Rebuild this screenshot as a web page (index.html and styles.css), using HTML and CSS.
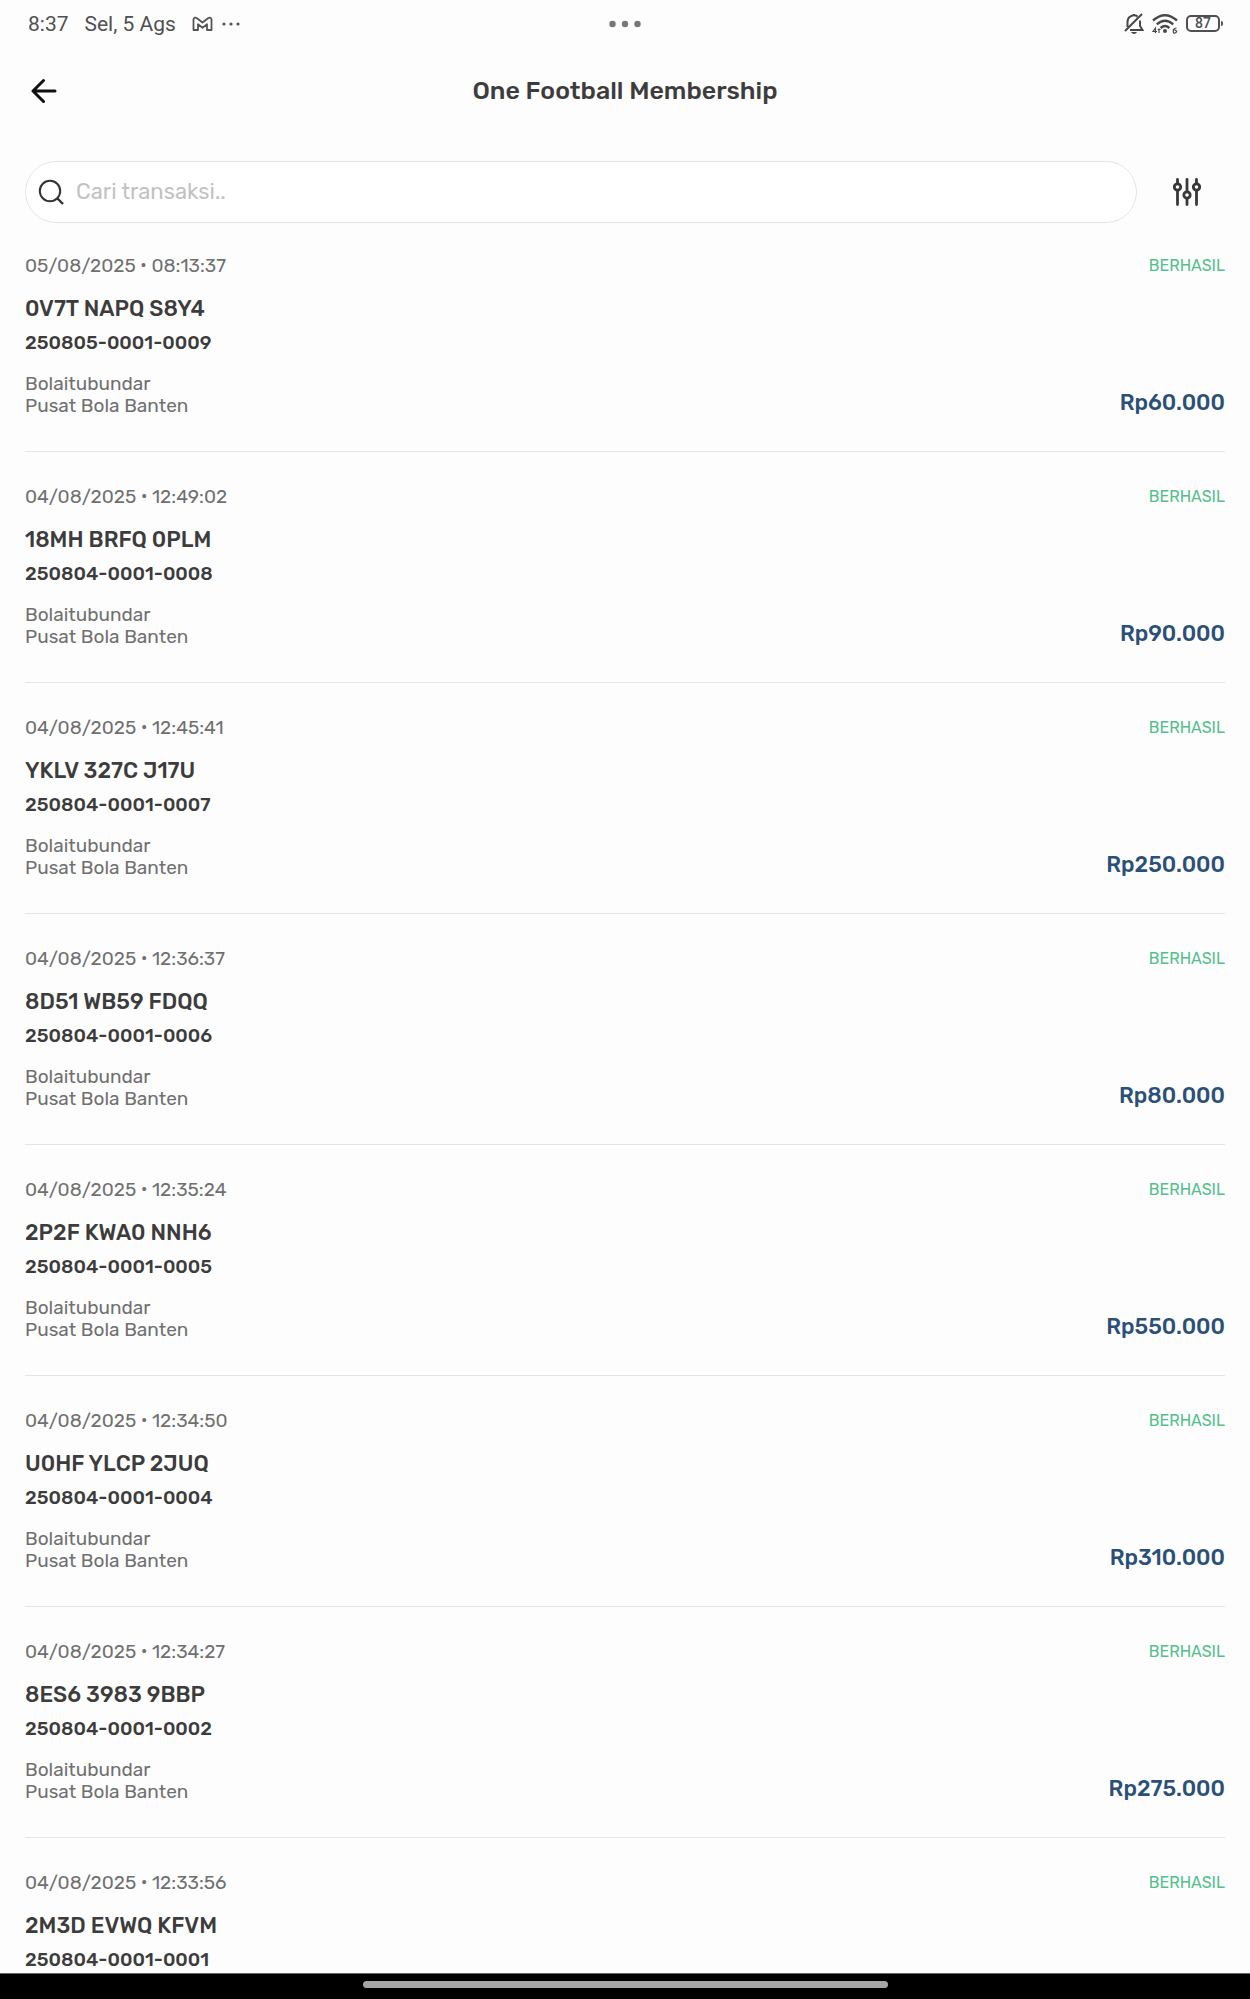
FILE: index.html
```html
<!DOCTYPE html>
<html lang="id">
<head>
<meta charset="utf-8">
<meta name="viewport" content="width=device-width, initial-scale=1">
<title>One Football Membership</title>
<link rel="stylesheet" href="styles.css">
</head>
<body>
<div class="screen">
  <div class="status-bar">
    <div class="status-left">
      <span>8:37</span>
      <span>Sel, 5 Ags</span>
      <svg class="status-mail" width="48" height="16" viewBox="0 0 48 16" aria-hidden="true">
        <path d="M1.500 14V3.200Q2.500.6 5 2.200L10.500 6.500 16 2.200Q18.500.6 19.500 3.200V14H15V8.200L10.500 11.700 6 8.200V14Z" fill="none" stroke="#555" stroke-width="1.800" stroke-linejoin="round"/>
        <g fill="#555"><circle cx="32" cy="8" r="1.600"/><circle cx="39" cy="8" r="1.600"/><circle cx="46" cy="8" r="1.600"/></g>
      </svg>
    </div>
    <svg width="32" height="8" viewBox="0 0 32 8" fill="#777" aria-hidden="true"><circle cx="3.500" cy="4" r="3.200"/><circle cx="16" cy="4" r="3.200"/><circle cx="28.500" cy="4" r="3.200"/></svg>
    <div class="status-right">
      <svg width="20" height="22" viewBox="0 0 20 22" fill="none" stroke="#484848" stroke-width="2" aria-hidden="true">
        <path d="M3.500 14V8.500A6.300 6.300 0 0 1 13.500 3.600M16 7.500V13L18.500 17H6M1 18 18 1M10 1V3"/>
        <path d="M7 19H13Q12 21 10 21T7 19Z" fill="#484848" stroke="none"/>
      </svg>
      <svg width="26" height="22" viewBox="0 0 26 22" aria-hidden="true">
        <g fill="none" stroke="#484848" stroke-width="2.400"><path d="M1 7.500Q13-3 25 7.500M4.800 11.300Q13 4 21.200 11.300M8.600 15Q13 11 17.400 15"/></g>
        <circle cx="13" cy="18" r="2" fill="#484848"/>
        <path d="M3.500 20V15L1 18.500H5M7 20V15.500M5.800 16.500H8.500M24.500 15Q21.300 15 21.300 18T23 20 24.700 18.500 23 17 21.300 18.300" fill="none" stroke="#484848" stroke-width="1.200"/>
      </svg>
      <span class="battery">87</span>
    </div>
  </div>

  <header class="app-bar">
    <button class="icon-button" type="button" aria-label="Kembali">
      <svg width="26" height="26" viewBox="0 0 26 26" fill="none" stroke="#111" stroke-width="3" stroke-linecap="round" stroke-linejoin="round" aria-hidden="true"><path d="M24 13H2M12.500 2.500 2 13 12.500 23.500"/></svg>
    </button>
    <h1 class="app-title">One Football Membership</h1>
  </header>

  <form class="search-row" role="search">
    <label class="search-box">
      <svg width="26" height="26" viewBox="0 0 26 26" fill="none" stroke="#333" stroke-width="2" aria-hidden="true"><circle cx="12" cy="12" r="10.200"/><path d="M19.500 19.500 25 25" stroke-width="2.400"/></svg>
      <input class="search-input" type="search" placeholder="Cari transaksi.." aria-label="Cari transaksi">
    </label>
    <button class="filter-button" type="button" aria-label="Filter">
      <svg width="28" height="28" viewBox="0 0 28 28" fill="none" stroke="#383838" stroke-width="2.800" stroke-linecap="round" aria-hidden="true"><path d="M4.500 1.500V5M4.500 13V26.500M14 1.500V13M14 21V26.500M23.500 1.500V5M23.500 13V26.500"/><circle cx="4.500" cy="9" r="3.200"/><circle cx="14" cy="17" r="3.200"/><circle cx="23.500" cy="9" r="3.200"/></svg>
    </button>
  </form>

  <ul class="transactions">
    <li class="transaction">
      <div class="details"><time class="date">05/08/2025 <span class="dot">•</span> 08:13:37</time><strong class="code">0V7T NAPQ S8Y4</strong><span class="number">250805-0001-0009</span><span class="place">Bolaitubundar<br>Pusat Bola Banten</span></div>
      <div class="result"><span class="state">BERHASIL</span><span class="amount">Rp60.000</span></div>
    </li>
    <li class="transaction">
      <div class="details"><time class="date">04/08/2025 <span class="dot">•</span> 12:49:02</time><strong class="code">18MH BRFQ 0PLM</strong><span class="number">250804-0001-0008</span><span class="place">Bolaitubundar<br>Pusat Bola Banten</span></div>
      <div class="result"><span class="state">BERHASIL</span><span class="amount">Rp90.000</span></div>
    </li>
    <li class="transaction">
      <div class="details"><time class="date">04/08/2025 <span class="dot">•</span> 12:45:41</time><strong class="code">YKLV 327C J17U</strong><span class="number">250804-0001-0007</span><span class="place">Bolaitubundar<br>Pusat Bola Banten</span></div>
      <div class="result"><span class="state">BERHASIL</span><span class="amount">Rp250.000</span></div>
    </li>
    <li class="transaction">
      <div class="details"><time class="date">04/08/2025 <span class="dot">•</span> 12:36:37</time><strong class="code">8D51 WB59 FDQQ</strong><span class="number">250804-0001-0006</span><span class="place">Bolaitubundar<br>Pusat Bola Banten</span></div>
      <div class="result"><span class="state">BERHASIL</span><span class="amount">Rp80.000</span></div>
    </li>
    <li class="transaction">
      <div class="details"><time class="date">04/08/2025 <span class="dot">•</span> 12:35:24</time><strong class="code">2P2F KWA0 NNH6</strong><span class="number">250804-0001-0005</span><span class="place">Bolaitubundar<br>Pusat Bola Banten</span></div>
      <div class="result"><span class="state">BERHASIL</span><span class="amount">Rp550.000</span></div>
    </li>
    <li class="transaction">
      <div class="details"><time class="date">04/08/2025 <span class="dot">•</span> 12:34:50</time><strong class="code">U0HF YLCP 2JUQ</strong><span class="number">250804-0001-0004</span><span class="place">Bolaitubundar<br>Pusat Bola Banten</span></div>
      <div class="result"><span class="state">BERHASIL</span><span class="amount">Rp310.000</span></div>
    </li>
    <li class="transaction">
      <div class="details"><time class="date">04/08/2025 <span class="dot">•</span> 12:34:27</time><strong class="code">8ES6 3983 9BBP</strong><span class="number">250804-0001-0002</span><span class="place">Bolaitubundar<br>Pusat Bola Banten</span></div>
      <div class="result"><span class="state">BERHASIL</span><span class="amount">Rp275.000</span></div>
    </li>
    <li class="transaction">
      <div class="details"><time class="date">04/08/2025 <span class="dot">•</span> 12:33:56</time><strong class="code">2M3D EVWQ KFVM</strong><span class="number">250804-0001-0001</span></div>
      <div class="result"><span class="state">BERHASIL</span></div>
    </li>
  </ul>

  <div class="nav-bar"><span class="nav-handle"></span></div>
</div>
</body>
</html>
```
FILE: styles.css
```css
* {
  box-sizing: border-box;
}

body {
  margin: 0;
  background: #fdfdfd;
  color: #3c3c3c;
  font-family: Rubik, Inter, sans-serif;
}

button {
  padding: 0;
  border: 0;
  background: none;
  cursor: pointer;
}

svg {
  display: block;
  flex: none;
}

.screen {
  display: flex;
  flex-direction: column;
  height: 100vh;
}

/* System status bar */
.status-bar {
  display: grid;
  grid-template-columns: 1fr auto 1fr;
  align-items: center;
  flex: none;
  height: 47px;
  padding: 0 28px;
  color: #505050;
  font: 21px/24px Roboto, sans-serif;
}

.status-left,
.status-right {
  display: flex;
  align-items: center;
  gap: 16px;
}

.status-right {
  justify-content: flex-end;
  gap: 8px;
}

.battery {
  position: relative;
  width: 34px;
  height: 17px;
  margin-right: 2px;
  border: 2px solid #505050;
  border-radius: 5px;
  font: 500 14px/13px Roboto, sans-serif;
  text-align: center;
}

.battery::after {
  content: "";
  position: absolute;
  top: 4px;
  right: -5px;
  width: 2px;
  height: 5px;
  border-radius: 0 2px 2px 0;
  background: #505050;
}

/* Page header */
.app-bar {
  display: grid;
  grid-template-columns: 48px 1fr 48px;
  align-items: center;
  flex: none;
  height: 87px;
  padding: 0 20px;
}

.icon-button {
  display: grid;
  place-items: center;
  width: 48px;
  height: 48px;
}

.app-title {
  margin: 0;
  font-size: 25px;
  font-weight: 500;
  line-height: 32px;
  text-align: center;
}

/* Search */
.search-row {
  display: flex;
  gap: 12px;
  flex: none;
  margin-top: 27px;
  padding: 0 25px;
}

.search-box {
  display: flex;
  align-items: center;
  flex: 1;
  gap: 12px;
  height: 62px;
  padding: 0 24px 0 12px;
  border: 1px solid #e4e4e4;
  border-radius: 31px;
  background: #fff;
}

.search-input {
  flex: 1;
  min-width: 0;
  padding: 0;
  border: 0;
  outline: 0;
  background: none;
  color: inherit;
  font: 22px/28px Rubik, Inter, sans-serif;
}

.search-input::placeholder {
  color: #c2c2c2;
}

.filter-button {
  display: grid;
  place-items: center;
  width: 76px;
}

/* Transaction list */
.transactions {
  flex: 1;
  min-height: 0;
  margin: 0;
  padding: 0 25px;
  overflow: hidden;
  list-style: none;
}

.transaction {
  display: flex;
  justify-content: space-between;
  padding: 33px 0 34px;
  border-bottom: 1px solid #e6e6e6;
}

.transaction:first-child {
  padding-top: 31px;
}

.transaction:last-child {
  border-bottom: 0;
}

.details,
.result {
  display: flex;
  flex-direction: column;
}

.result {
  justify-content: space-between;
  align-items: flex-end;
}

.date,
.number,
.place {
  font-size: 19px;
  line-height: 24px;
}

.date,
.place {
  color: #707070;
}

.dot {
  font-family: Roboto, sans-serif;
}

.code {
  margin-top: 17px;
  font: 500 22px/28px Rubik, Roboto, sans-serif;
}

.number {
  margin-top: 8px;
  font-weight: 500;
}

.place {
  margin-top: 18px;
  line-height: 22px;
}

.state {
  color: #54bf8c;
  font: 16px/24px Rubik, Roboto, sans-serif;
}

.amount {
  color: #2b5078;
  font-size: 22px;
  font-weight: 500;
  line-height: 28px;
}

/* System navigation bar */
.nav-bar {
  display: flex;
  justify-content: center;
  flex: none;
  height: 26px;
  padding-top: 7px;
  border-top: 1px solid #666;
  background: #000;
}

.nav-handle {
  width: 42%;
  height: 7px;
  border-radius: 4px;
  background: #a6a6a6;
}
```
